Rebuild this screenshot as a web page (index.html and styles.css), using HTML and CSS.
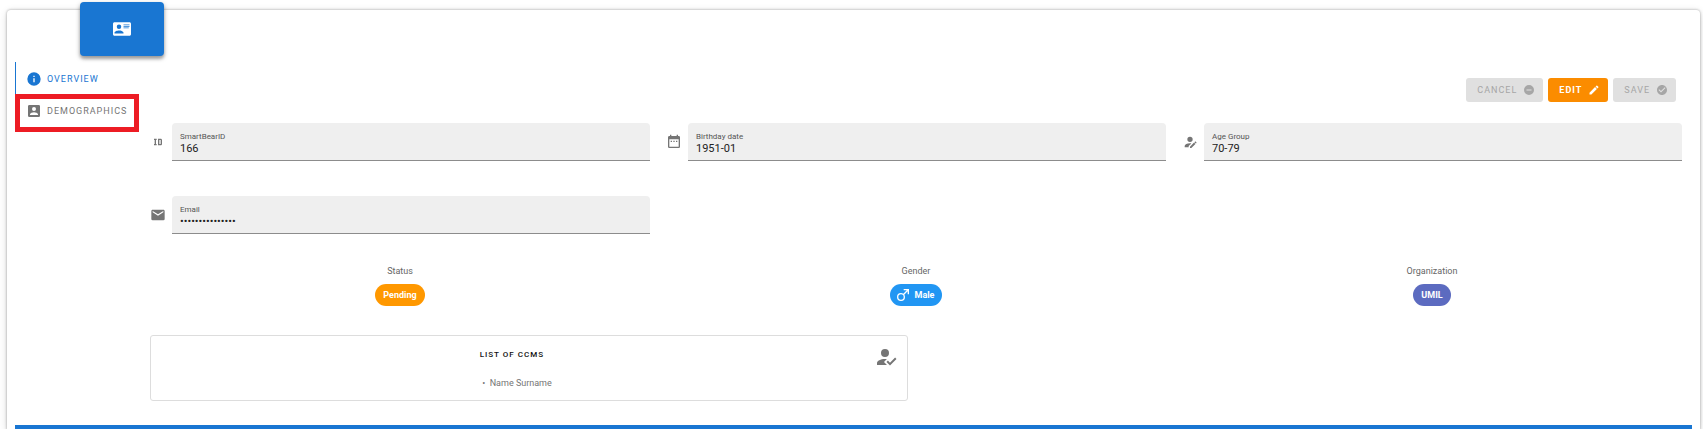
FILE: index.html
```html
<!DOCTYPE html>
<html lang="en">
<head>
<meta charset="utf-8">
<title>Participant overview</title>
<link rel="stylesheet" href="styles.css">
</head>
<body>
<main class="card">
  <header class="card-head">
    <div class="tile">
      <svg class="icon icon-lg" viewBox="0 0 24 24"><path d="M2,3H22C23.05,3 24,3.95 24,5V19C24,20.05 23.05,21 22,21H2C0.95,21 0,20.05 0,19V5C0,3.95 0.95,3 2,3M14,6V7H22V6H14M14,8V9H21.5L22,9V8H14M14,10V11H21V10H14M8,13.91C6,13.91 2,15 2,17V18H14V17C14,15 10,13.91 8,13.91M8,6A3,3 0 0,0 5,9A3,3 0 0,0 8,12A3,3 0 0,0 11,9A3,3 0 0,0 8,6Z"/></svg>
    </div>
  </header>
  <div class="body">
    <nav class="tabs">
      <button class="tab tab-active" type="button">
        <svg class="icon icon-md" viewBox="0 0 24 24"><path d="M13,9H11V7H13M13,17H11V11H13M12,2A10,10 0 0,0 2,12A10,10 0 0,0 12,22A10,10 0 0,0 22,12A10,10 0 0,0 12,2Z"/></svg>
        <span>OVERVIEW</span>
      </button>
      <button class="tab tab-marked" type="button">
        <svg class="icon icon-md" viewBox="0 0 24 24"><path d="M6,17C6,15 10,13.9 12,13.9C14,13.9 18,15 18,17V18H6M15,9A3,3 0 0,1 12,12A3,3 0 0,1 9,9A3,3 0 0,1 12,6A3,3 0 0,1 15,9M3,5V19A2,2 0 0,0 5,21H19A2,2 0 0,0 21,19V5A2,2 0 0,0 19,3H5C3.89,3 3,3.9 3,5Z"/></svg>
        <span>DEMOGRAPHICS</span>
      </button>
    </nav>
    <section class="panel">
      <div class="actions">
        <button class="btn" type="button" disabled><span>CANCEL</span>
          <svg class="icon icon-xs" viewBox="0 0 24 24"><path d="M17,13H7V11H17M12,2A10,10 0 0,0 2,12A10,10 0 0,0 12,22A10,10 0 0,0 22,12A10,10 0 0,0 12,2Z"/></svg>
        </button>
        <button class="btn btn-edit" type="button"><span>EDIT</span>
          <svg class="icon icon-xs" viewBox="0 0 24 24"><path d="M20.71,7.04C21.1,6.65 21.1,6 20.71,5.63L18.37,3.29C18,2.9 17.35,2.9 16.96,3.29L15.12,5.12L18.87,8.87M3,17.25V21H6.75L17.81,9.93L14.06,6.18L3,17.25Z"/></svg>
        </button>
        <button class="btn" type="button" disabled><span>SAVE</span>
          <svg class="icon icon-xs" viewBox="0 0 24 24"><path d="M12 2C6.5 2 2 6.5 2 12S6.5 22 12 22 22 17.5 22 12 17.5 2 12 2M10 17L5 12L6.41 10.59L10 14.17L17.59 6.58L19 8L10 17Z"/></svg>
        </button>
      </div>
      <div class="fields">
        <div class="field">
          <svg class="icon icon-md" viewBox="0 0 24 24"><path d="M10 7V9H9V15H10V17H6V15H7V9H6V7H10M16 7C17.11 7 18 7.9 18 9V15C18 16.11 17.11 17 16 17H12V7M16 9H14V15H16V9Z"/></svg>
          <div class="box"><label for="sid">SmartBearID</label><input id="sid" type="text" value="166" readonly></div>
        </div>
        <div class="field">
          <svg class="icon icon-md" viewBox="0 0 24 24"><path d="M9,10H7V12H9V10M13,10H11V12H13V10M17,10H15V12H17V10M19,3H18V1H16V3H8V1H6V3H5C3.89,3 3,3.9 3,5V19A2,2 0 0,0 5,21H19A2,2 0 0,0 21,19V5A2,2 0 0,0 19,3M19,19H5V8H19V19Z"/></svg>
          <div class="box"><label for="birth">Birthday date</label><input id="birth" type="text" value="1951-01" readonly></div>
        </div>
        <div class="field">
          <svg class="icon icon-md" viewBox="0 0 24 24"><path d="M21.7,13.35L20.7,14.35L18.65,12.3L19.65,11.3C19.86,11.09 20.21,11.09 20.42,11.3L21.7,12.58C21.91,12.79 21.91,13.14 21.7,13.35M12,18.94L18.06,12.88L20.11,14.93L14.06,21H12V18.94M12,14C7.58,14 4,15.79 4,18V20H10V18.11L14,14.11C13.34,14.03 12.67,14 12,14M12,4A4,4 0 0,0 8,8A4,4 0 0,0 12,12A4,4 0 0,0 16,8A4,4 0 0,0 12,4Z"/></svg>
          <div class="box"><label for="age">Age Group</label><input id="age" type="text" value="70-79" readonly></div>
        </div>
        <div class="field">
          <svg class="icon icon-md" viewBox="0 0 24 24"><path d="M20,8L12,13L4,8V6L12,11L20,6M20,4H4C2.89,4 2,4.89 2,6V18A2,2 0 0,0 4,20H20A2,2 0 0,0 22,18V6C22,4.89 21.1,4 20,4Z"/></svg>
          <div class="box"><label for="email">Email</label><input id="email" type="text" value="•••••••••••••••" readonly></div>
        </div>
      </div>
      <div class="facts">
        <div class="fact"><span class="fact-name">Status</span><span class="chip chip-pending">Pending</span></div>
        <div class="fact"><span class="fact-name">Gender</span><span class="chip chip-male"><svg class="icon icon-md" viewBox="0 0 24 24"><path d="M9,9C10.29,9 11.5,9.41 12.47,10.11L17.58,5H13V3H21V11H19V6.41L13.89,11.5C14.59,12.5 15,13.7 15,15A6,6 0 0,1 9,21A6,6 0 0,1 3,15A6,6 0 0,1 9,9M9,11A4,4 0 0,0 5,15A4,4 0 0,0 9,19A4,4 0 0,0 13,15A4,4 0 0,0 9,11Z"/></svg>Male</span></div>
        <div class="fact"><span class="fact-name">Organization</span><span class="chip chip-org">UMIL</span></div>
      </div>
      <div class="lists">
        <section class="ccms">
          <div class="ccms-text">
            <h2>LIST OF CCMS</h2>
            <ul><li>Name Surname</li></ul>
          </div>
          <svg class="icon icon-xl" viewBox="0 0 24 24"><path d="M21.1,12.5L22.5,13.91L15.97,20.5L12.5,17L13.9,15.59L15.97,17.67L21.1,12.5M10,17L13,20H3V18C3,15.79 6.58,14 11,14L12.89,14.11L10,17M11,4A4,4 0 0,1 15,8A4,4 0 0,1 11,12A4,4 0 0,1 7,8A4,4 0 0,1 11,4Z"/></svg>
        </section>
      </div>
    </section>
  </div>
  <div class="divider"></div>
</main>
</body>
</html>
```
FILE: styles.css
```css
* { box-sizing: border-box; }

body {
  margin: 0;
  padding: 10px 3px 0 7px;
  background: #fff;
  color: #666;
  font: 9px/14px Roboto, sans-serif;
}

button, input { font: inherit; color: inherit; }

.icon { display: block; flex: none; fill: currentColor; }
.icon-xs { width: 12px; height: 12px; }
.icon-md { width: 16px; height: 16px; }
.icon-lg { width: 18px; height: 18px; }
.icon-xl { width: 24px; height: 24px; }

.card {
  padding: 0 8px;
  border-radius: 4px 4px 0 0;
  box-shadow: 0 0 2px 1px rgba(0, 0, 0, .16), 0 2px 8px rgba(0, 0, 0, .14);
}

.card-head { display: flex; height: 52px; padding-left: 65px; }

.tile {
  display: flex;
  align-items: center;
  justify-content: center;
  width: 84px;
  height: 54px;
  margin-top: -8px;
  border-radius: 4px;
  background: #1976d2;
  color: #fff;
  box-shadow: 0 3px 3px rgba(0, 0, 0, .2), 0 2px 5px rgba(0, 0, 0, .3);
}

.body { display: flex; padding-right: 10px; }

.tabs { display: flex; flex: 0 0 135px; flex-direction: column; align-items: flex-start; }

.tab {
  position: relative;
  display: flex;
  align-items: center;
  gap: 5px;
  height: 32px;
  padding: 1px 0 0 10px;
  border: 0;
  border-left: 1px solid transparent;
  background: none;
  color: #757575;
  letter-spacing: 1px;
}

.tab-active { border-left-color: #1976d2; color: #1976d2; }

.tab-marked::after {
  content: "";
  position: absolute;
  inset: 0 -12px -6px -1px;
  border: 5px solid #ed1c24;
}

.panel { flex: 1; min-width: 0; }

.actions {
  display: flex;
  justify-content: flex-end;
  gap: 5px;
  padding: 16px 6px 21px 0;
}

.btn {
  display: flex;
  align-items: center;
  gap: 6px;
  height: 24px;
  padding: 0 8px 0 11px;
  border: 0;
  border-radius: 3px;
  background: #e0e0e0;
  color: #a6a6a6;
  letter-spacing: 1px;
}

.btn-edit { background: #fb8c00; color: #fff; font-weight: 700; }

.fields, .facts {
  display: grid;
  grid-template-columns: repeat(3, minmax(0, 1fr));
  column-gap: 16px;
}

.fields { row-gap: 35px; }

.field { display: flex; align-items: center; gap: 6px; color: #757575; }

.box {
  flex: 1;
  min-width: 0;
  height: 38px;
  padding: 9px 8px 0;
  border-bottom: 1px solid #8c8c8c;
  border-radius: 4px 4px 0 0;
  background: #efefef;
  color: #555;
}

.box label { display: block; font-size: 8px; line-height: 10px; }

.box input {
  display: block;
  width: 100%;
  height: 14px;
  padding: 0;
  border: 0;
  outline: 0;
  background: none;
  color: #222;
  font-size: 11px;
}

.facts { padding-top: 30px; }

.fact { display: flex; flex-direction: column; align-items: center; gap: 6px; }

.chip {
  display: flex;
  align-items: center;
  gap: 4px;
  height: 22px;
  padding: 0 8px;
  border-radius: 11px;
  color: #fff;
  font-weight: 700;
}

.chip-pending { background: #ff9800; }
.chip-male { padding-left: 5px; background: #2196f3; }
.chip-org { background: #5c6bc0; }

.lists {
  display: grid;
  grid-template-columns: repeat(2, minmax(0, 1fr));
  gap: 16px;
  padding: 29px 0 24px;
}

.ccms {
  display: flex;
  justify-content: space-between;
  height: 66px;
  padding: 9px 9px 0 0;
  border: 1px solid #ddd;
  border-radius: 3px;
  color: #757575;
}

.ccms-text { padding-left: 44%; }

.ccms h2 {
  margin: 3px 0 14px;
  color: #111;
  font-size: 8px;
  font-weight: 500;
  line-height: 14px;
  letter-spacing: 1px;
}

.ccms ul { margin: 0; padding-left: 10px; }
.ccms li::marker { content: "•  "; }

.divider { height: 4px; background: #1976d2; }
```
